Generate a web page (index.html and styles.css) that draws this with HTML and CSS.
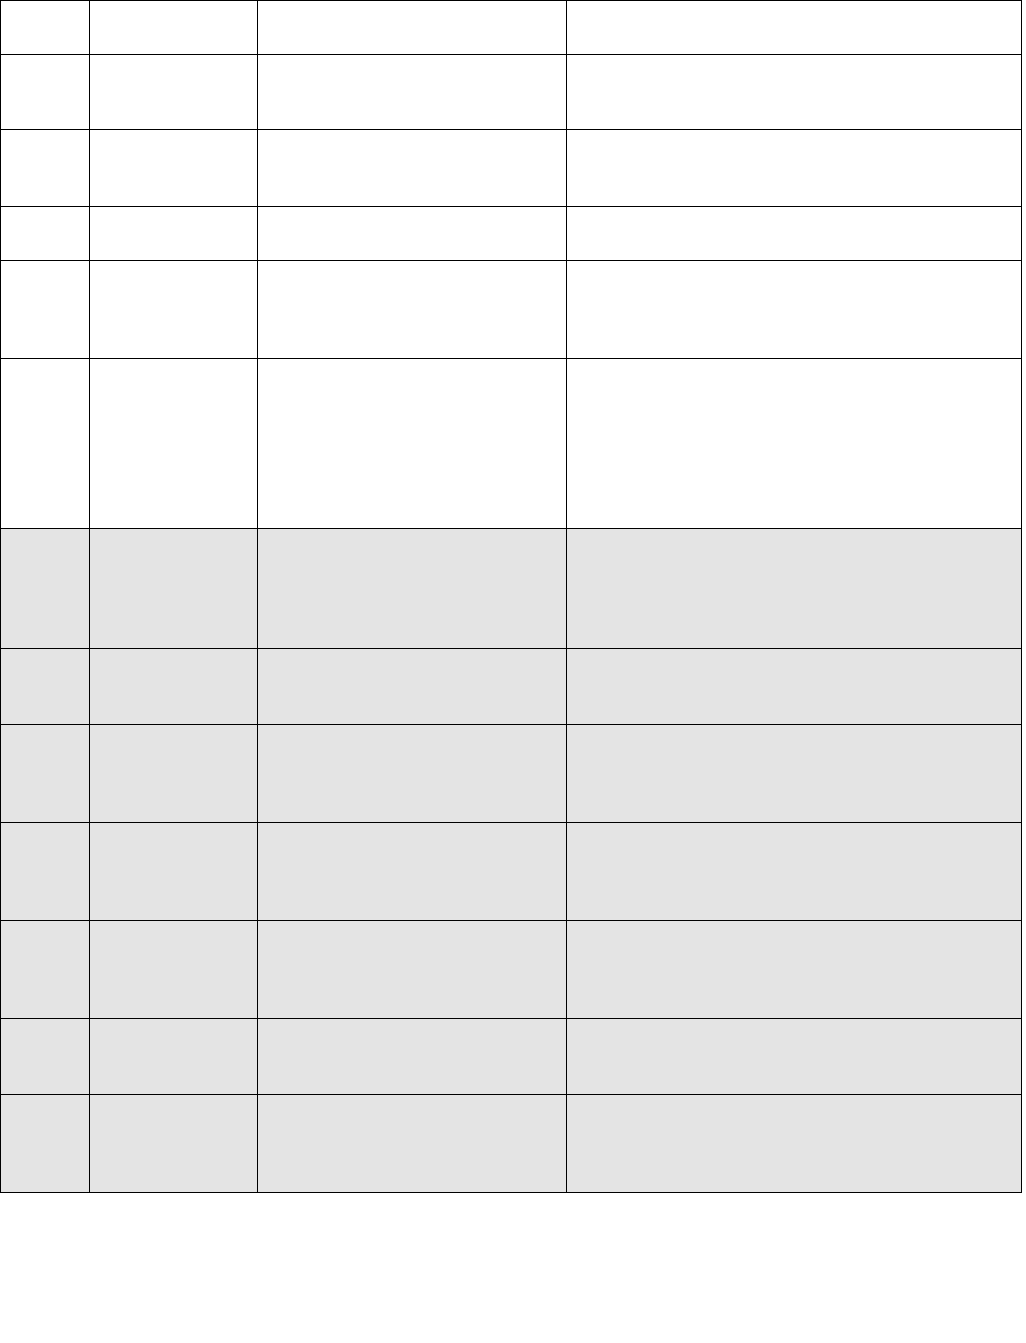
FILE: index.html
```html
<!DOCTYPE html>
<html lang="en">
<head>
<meta charset="utf-8">
<title>Table</title>
<link rel="stylesheet" href="styles.css">
</head>
<body>
<div class="table" role="table">
  <div class="row h53" role="row"><div class="cell"></div><div class="cell"></div><div class="cell"></div><div class="cell"></div></div>
  <div class="row h74" role="row"><div class="cell"></div><div class="cell"></div><div class="cell"></div><div class="cell"></div></div>
  <div class="row h76" role="row"><div class="cell"></div><div class="cell"></div><div class="cell"></div><div class="cell"></div></div>
  <div class="row h53" role="row"><div class="cell"></div><div class="cell"></div><div class="cell"></div><div class="cell"></div></div>
  <div class="row h97" role="row"><div class="cell"></div><div class="cell"></div><div class="cell"></div><div class="cell"></div></div>
  <div class="row h169" role="row"><div class="cell"></div><div class="cell"></div><div class="cell"></div><div class="cell"></div></div>
  <div class="row h119 shaded" role="row"><div class="cell"></div><div class="cell"></div><div class="cell"></div><div class="cell"></div></div>
  <div class="row h75 shaded" role="row"><div class="cell"></div><div class="cell"></div><div class="cell"></div><div class="cell"></div></div>
  <div class="row h97 shaded" role="row"><div class="cell"></div><div class="cell"></div><div class="cell"></div><div class="cell"></div></div>
  <div class="row h97 shaded" role="row"><div class="cell"></div><div class="cell"></div><div class="cell"></div><div class="cell"></div></div>
  <div class="row h97 shaded" role="row"><div class="cell"></div><div class="cell"></div><div class="cell"></div><div class="cell"></div></div>
  <div class="row h75 shaded" role="row"><div class="cell"></div><div class="cell"></div><div class="cell"></div><div class="cell"></div></div>
  <div class="row h97 shaded" role="row"><div class="cell"></div><div class="cell"></div><div class="cell"></div><div class="cell"></div></div>
</div>
</body>
</html>
```

FILE: styles.css
```css
html, body {
  margin: 0;
  padding: 0;
  background: #ffffff;
  font-family: "Liberation Sans", Arial, sans-serif;
}

.table {
  width: 1022px;
  box-sizing: border-box;
  display: flex;
  flex-direction: column;
  gap: 1px;
  padding: 1px;
  background: #000000;
}

.row {
  display: grid;
  grid-template-columns: 88px 167px 308px 454px;
  gap: 1px;
}

.cell {
  background: #ffffff;
}

.shaded .cell {
  background: #e4e4e4;
}

.h53 { height: 53px; }
.h74 { height: 74px; }
.h75 { height: 75px; }
.h76 { height: 76px; }
.h97 { height: 97px; }
.h119 { height: 119px; }
.h169 { height: 169px; }
```
